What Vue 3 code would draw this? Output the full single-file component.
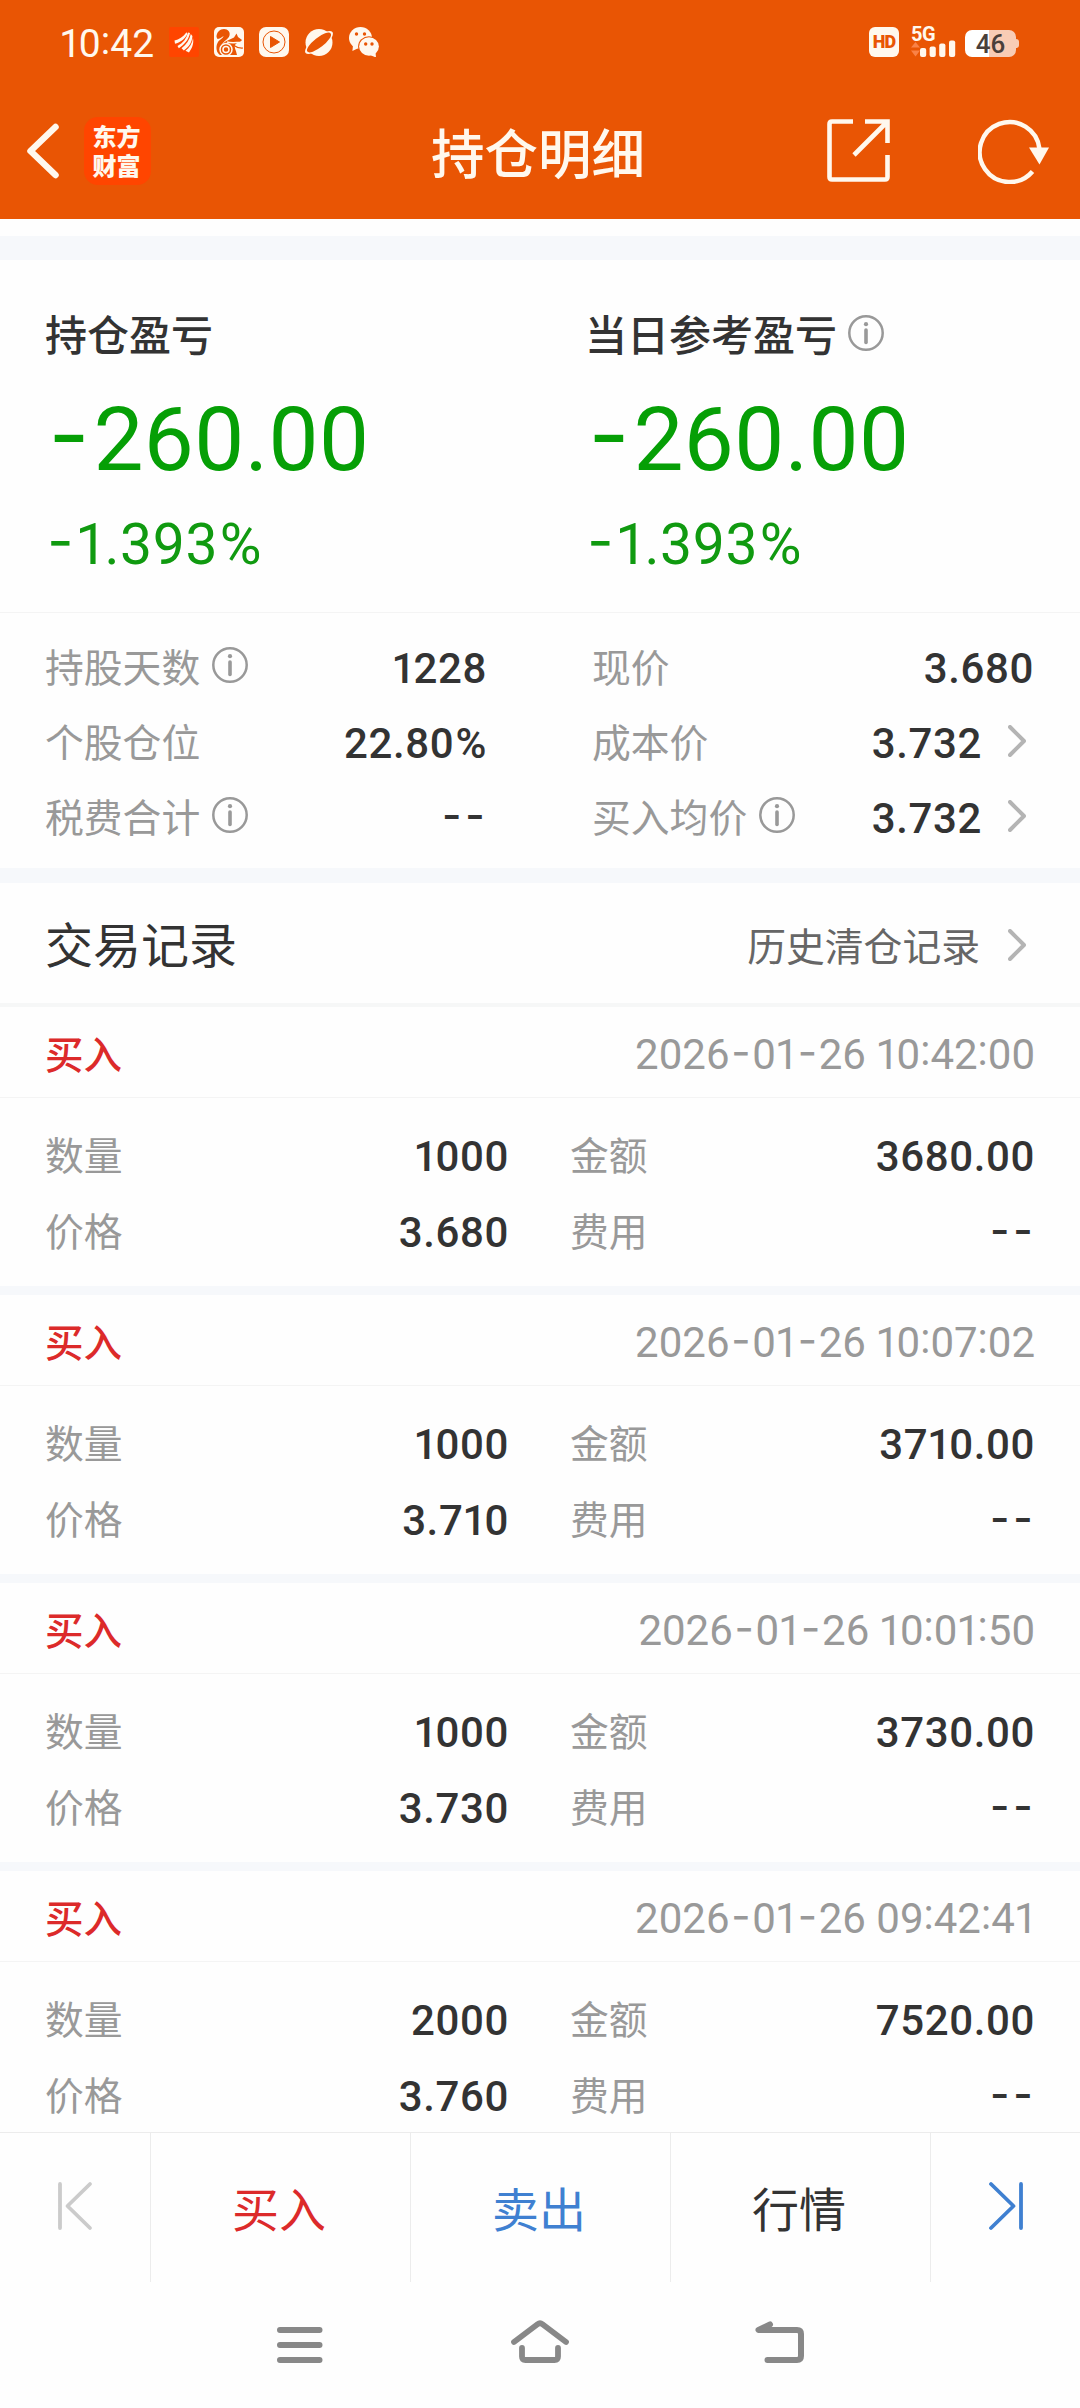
<script setup>
import { h } from 'vue'

const KIND = { '-': 'dash', ':': 'colon', '1': 'one', '.': 'dot', '%': 'pct' }

// Renders a figure character by character so punctuation can be tuned.
const Num = (props) =>
  h('span', { class: 'num' }, [...props.v].map((c) => (KIND[c] ? h('span', { class: KIND[c] }, c) : c)))
Num.props = ['v']

const Info = () =>
  h('svg', { class: 'info', viewBox: '0 0 36 36', width: 36, height: 36 }, [
    h('circle', { cx: 18, cy: 18, r: 16.7, fill: 'none', stroke: '#999', 'stroke-width': 2.5 }),
    h('circle', { cx: 18, cy: 9.2, r: 2.1, fill: '#999' }),
    h('path', { d: 'M18 15v12.5', stroke: '#999', 'stroke-width': 3.6, 'stroke-linecap': 'round' }),
  ])

const Arrow = () =>
  h('svg', { class: 'arrow', viewBox: '0 0 18 32', width: 18, height: 32 }, [
    h('path', {
      d: 'M2 2L16 16L2 30',
      fill: 'none',
      stroke: '#b4b4b4',
      'stroke-width': 4,
      'stroke-linecap': 'round',
      'stroke-linejoin': 'round',
    }),
  ])

const summary = [
  { label: '持仓盈亏', amount: '-260.00', rate: '-1.393%' },
  { label: '当日参考盈亏', info: true, amount: '-260.00', rate: '-1.393%' },
]

const details = [
  [
    { label: '持股天数', info: true, value: '1228' },
    { label: '个股仓位', value: '22.80%' },
    { label: '税费合计', info: true, value: '--' },
  ],
  [
    { label: '现价', value: '3.680' },
    { label: '成本价', value: '3.732', link: true },
    { label: '买入均价', info: true, value: '3.732', link: true },
  ],
]

const records = [
  { time: '2026-01-26 10:42:00', qty: '1000', amount: '3680.00', price: '3.680', fee: '--' },
  { time: '2026-01-26 10:07:02', qty: '1000', amount: '3710.00', price: '3.710', fee: '--' },
  { time: '2026-01-26 10:01:50', qty: '1000', amount: '3730.00', price: '3.730', fee: '--' },
  { time: '2026-01-26 09:42:41', qty: '2000', amount: '7520.00', price: '3.760', fee: '--' },
]
</script>

<template>
  <div class="page">
    <header class="top">
      <div class="status">
        <span class="clock"><Num v="10:42" /></span>
        <div class="apps">
          <svg viewBox="0 0 30 30" width="30" height="30">
            <rect width="30" height="30" rx="2" fill="#ff4500" />
            <path d="M5.5 13.5C10 12.5 14 10 17.5 5.2L18.4 7C15.500 12.500 11 15.500 6 16.800Z" fill="#fff8ee" />
            <path d="M19 5.500L21 6C19.500 13 15.500 17.500 9.800 21.200L8.500 19C14 16 17.500 11.500 19 5.500Z" fill="#fff8ee" />
            <path d="M21.800 7L23.400 9C23.200 15 20 20 14.800 23.500L12.500 21.300C17.500 17.500 20.500 13 21.800 7Z" fill="#fff8ee" />
            <path d="M24 11C25.200 17 22.500 22 20 25.500L16.500 23.800C20.500 20.500 23.300 16.500 24 11Z" fill="#fff8ee" />
          </svg>
          <svg viewBox="0 0 30 30" width="30" height="30">
            <rect width="30" height="30" rx="5" fill="#fff8ee" />
            <path
              d="M2.500 10C2.500 5 6 2 10 2C14 2 16.500 5 15.500 8.500C14.500 12.500 9 14 8 18C11 13.500 16 13 20 10.500L22.500 6.500L24 10L28 13C26.500 15.500 23 15 21 18C20 20 22 23 23 28H6C2.500 26 1.500 20 3.500 16C5 12.500 9 12 9.500 9C7 11 5 12 3.500 12Z"
              fill="#e95504"
            />
            <circle cx="12" cy="22.500" r="6" fill="#e95504" stroke="#fff8ee" stroke-width="1.500" />
            <circle cx="12" cy="22.500" r="3" fill="#e95504" stroke="#fff8ee" stroke-width="1.500" />
            <path d="M13 15C18 16.500 24 15 29 15.500" fill="none" stroke="#fff8ee" stroke-width="1.500" />
            <path d="M19 18Q24 21.500 29 21" fill="none" stroke="#e95504" stroke-width="1.200" />
          </svg>
          <svg viewBox="0 0 30 30" width="30" height="30">
            <rect width="30" height="30" rx="7" fill="#fff8ee" />
            <circle cx="15" cy="15" r="11" fill="none" stroke="#e95504" stroke-width="1" />
            <path d="M11.500 9.500V20.500L20.500 15Z" fill="#e95504" stroke="#e95504" stroke-linejoin="round" />
          </svg>
          <svg viewBox="0 0 30 30" width="30" height="30">
            <circle cx="15" cy="15.500" r="13.500" fill="#fff8ee" />
            <g transform="rotate(-38 15 15.500)">
              <ellipse cx="15" cy="15.500" rx="17" ry="6.200" fill="#fff8ee" />
              <ellipse cx="15" cy="15.500" rx="14.800" ry="4.900" fill="#e95504" />
            </g>
          </svg>
          <svg viewBox="0 0 30 30" width="30" height="30">
            <path d="M4 18.500L3.400 24L8.500 21.500Z" fill="#fff8ee" />
            <ellipse cx="11.500" cy="11" rx="11.500" ry="11" fill="#fff8ee" />
            <circle cx="7.500" cy="7" r="1.700" fill="#e95504" />
            <circle cx="15.500" cy="7" r="1.700" fill="#e95504" />
            <ellipse cx="20" cy="19.500" rx="10.900" ry="10.300" fill="#e95504" />
            <ellipse cx="20" cy="19.500" rx="9.900" ry="9.300" fill="#fff8ee" />
            <path d="M21 28L27 30.500L26.500 25Z" fill="#fff8ee" />
            <circle cx="16.700" cy="17" r="1.700" fill="#e95504" />
            <circle cx="23" cy="17" r="1.700" fill="#e95504" />
          </svg>
        </div>
        <div class="signals">
          <span class="hd">HD</span>
          <div class="net">
            <span class="fiveg">5G</span>
            <svg viewBox="0 0 45 17" width="45" height="17">
              <path d="M0 7.500L4.500 2L9 7.500ZM0 10.500H9L4.500 16.500Z" fill="#f98247" />
              <rect x="9" y="8" width="6.200" height="9" rx="2" fill="#fff8ee" />
              <rect x="18.600" y="6.500" width="6.200" height="10.500" rx="2" fill="#fff8ee" />
              <rect x="28.200" y="3.500" width="6.200" height="13.500" rx="2" fill="#fff8ee" />
              <rect x="38" y="0.500" width="6.200" height="16.500" rx="2" fill="#fff8ee" />
            </svg>
          </div>
          <div class="battery"><span class="cell">46</span><i class="nub"></i></div>
        </div>
      </div>
      <div class="bar">
        <svg class="back" viewBox="0 0 33 56" width="33" height="56">
          <path d="M29.500 4L4.500 28L29.500 52" fill="none" stroke="#fff8ee" stroke-width="6.500" stroke-linecap="round" stroke-linejoin="round" />
        </svg>
        <div class="logo"><span>东方</span><span>财富</span></div>
        <h1>持仓明细</h1>
        <svg class="share" viewBox="0 0 64 64" width="64" height="64">
          <path
            d="M26 2.500H5Q2.500 2.500 2.500 5V58Q2.500 60.500 5 60.500H58Q60.500 60.500 60.500 58V36M38 2.500H60.500V24M60.500 2.500L27 36"
            fill="none" stroke="#fff8ee" stroke-width="4.600"
          />
        </svg>
        <svg class="refresh" viewBox="0 0 72 66" width="72" height="66">
          <path d="M54.500 53.500A30 30 0 1 1 61.500 31" fill="none" stroke="#fff8ee" stroke-width="4.500" />
          <path d="M51 29.500H71L61.500 46.500Z" fill="#fff8ee" />
        </svg>
      </div>
    </header>

    <section class="summary">
      <div v-for="s in summary" :key="s.label" class="sum">
        <div class="sum-label">{{ s.label }}<Info v-if="s.info" /></div>
        <div class="sum-amount"><Num :v="s.amount" /></div>
        <div class="sum-rate"><Num :v="s.rate" /></div>
      </div>
    </section>

    <section class="details">
      <div v-for="(col, i) in details" :key="i" class="col">
        <div v-for="d in col" :key="d.label" class="row">
          <span class="label">{{ d.label }}</span>
          <Info v-if="d.info" />
          <span class="value"><Num :v="d.value" /></span>
          <Arrow v-if="d.link" />
        </div>
      </div>
    </section>

    <section class="heading">
      <h2>交易记录</h2>
      <span class="history">历史清仓记录</span>
      <Arrow />
    </section>

    <main class="records">
      <article v-for="r in records" :key="r.time" class="record">
        <div class="record-head">
          <span class="side">买入</span>
          <span class="time"><Num :v="r.time" /></span>
        </div>
        <div class="record-body">
          <div class="row">
            <span class="label">数量</span><span class="value"><Num :v="r.qty" /></span>
            <span class="label second">金额</span><span class="value"><Num :v="r.amount" /></span>
          </div>
          <div class="row">
            <span class="label">价格</span><span class="value"><Num :v="r.price" /></span>
            <span class="label second">费用</span><span class="value"><Num :v="r.fee" /></span>
          </div>
        </div>
      </article>
    </main>

    <footer class="actions">
      <div class="edge">
        <svg viewBox="0 0 36 50" width="36" height="50">
          <path d="M3 3V47M33 3L10.500 25L33 47" fill="none" stroke="#cbcbcb" stroke-width="3.800" stroke-linecap="round" stroke-linejoin="round" />
        </svg>
      </div>
      <div class="action buy">买入</div>
      <div class="action sell">卖出</div>
      <div class="action">行情</div>
      <div class="edge">
        <svg viewBox="0 0 36 50" width="36" height="50">
          <path d="M33 3V47M3 3L25.500 25L3 47" fill="none" stroke="#3f80d1" stroke-width="3.800" stroke-linecap="round" stroke-linejoin="round" />
        </svg>
      </div>
    </footer>

    <nav class="system">
      <svg viewBox="0 0 60 50" width="60" height="50">
        <path d="M10 10H49.500M10 25H49.500M10 40H49.500" fill="none" stroke="#888" stroke-width="6" stroke-linecap="round" />
      </svg>
      <svg viewBox="0 0 60 50" width="60" height="50">
        <path d="M4 22L27.500 4.200Q30 2.300 32.500 4.200L56 22M12 28V36.500Q12 40 15.500 40H44.500Q48 40 48 36.500V28" fill="none" stroke="#888" stroke-width="5.800" stroke-linecap="round" />
      </svg>
      <svg viewBox="0 0 60 50" width="60" height="50">
        <path d="M20 4.500L8.500 10H47Q51 10 51 14V36Q51 40 47 40H17.500" fill="none" stroke="#888" stroke-width="6" stroke-linecap="round" stroke-linejoin="round" />
      </svg>
    </nav>
  </div>
</template>

<style>
body {
  margin: 0;
  background: #fefefe;
}
</style>

<style scoped>
.page {
  width: 1080px;
  height: 2408px;
  overflow: hidden;
  display: flex;
  flex-direction: column;
  background: #fefefe;
  color: #333;
  font-family: 'Noto Sans CJK SC', sans-serif;
}
.page > * {
  flex: none;
  box-sizing: border-box;
}
h1,
h2 {
  margin: 0;
  font-weight: 400;
}
svg {
  display: block;
  flex: none;
}

/* figures */
.num {
  font-family: Roboto, 'Liberation Sans', sans-serif;
  white-space: pre;
}
.num :deep(.dash) {
  font-family: Inter, sans-serif;
  line-height: 1;
  margin: 0 0.04em;
  vertical-align: 0.05em;
}
.num :deep(.colon) {
  vertical-align: 0.09em;
  line-height: 1;
}
.num :deep(.one) {
  margin: 0 -0.06em 0 -0.02em;
}
.num :deep(.pct) {
  margin-left: 0.03em;
}

/* header */
.top {
  height: 219px;
  background: #e95504;
  color: #fff8ee;
}
.status {
  height: 84px;
  padding: 0 61px 0 60px;
  display: flex;
  align-items: center;
}
.clock {
  width: 109px;
  font-size: 39px;
  line-height: 40px;
}
.apps {
  display: flex;
  gap: 15px;
}
.signals {
  margin-left: auto;
  display: flex;
  align-items: center;
}
.hd {
  width: 30px;
  height: 30px;
  border-radius: 6px;
  background: #fff8ee;
  color: #e95504;
  font: 900 18px/30px Roboto, sans-serif;
  letter-spacing: -0.8px;
  text-align: center;
}
.net {
  height: 30px;
  margin-left: 12px;
}
.fiveg {
  display: block;
  height: 13px;
  font: 700 20px/15px Roboto, sans-serif;
  letter-spacing: -0.5px;
}
.battery {
  display: flex;
  align-items: center;
  margin: 3px 0 0 9px;
}
.cell {
  width: 51px;
  height: 27px;
  border-radius: 7px;
  background: linear-gradient(90deg, #fff 24px, #f8ccb5 24px);
  color: #4a3f3a;
  font: 500 26px/28px Roboto, sans-serif;
  text-align: center;
}
.nub {
  width: 3px;
  height: 9px;
  border-radius: 0 3px 3px 0;
  background: #f8ccb5;
}
.bar {
  height: 134px;
  padding-left: 26px;
  display: flex;
  align-items: center;
}
.logo {
  width: 67px;
  height: 68px;
  margin-left: 25px;
  border-radius: 14px;
  background: #ff4500;
  display: flex;
  flex-direction: column;
  align-items: center;
  justify-content: center;
  font-size: 24px;
  font-weight: 900;
  line-height: 29px;
  padding: 0 2px 3px 0;
  box-sizing: border-box;
}
h1 {
  margin: 0 0 0 280px;
  width: 216px;
  font-size: 53.500px;
  font-weight: 500;
  line-height: 60px;
}
.share {
  margin-left: 180px;
}
.refresh {
  margin-left: 87px;
}

/* profit summary */
.summary {
  height: 377px;
  margin-top: 17px;
  border-top: 24px solid #f6f8fb;
  border-bottom: 1px solid #f4f4f4;
  padding: 48px 0 0 45px;
  display: flex;
}
.sum {
  flex: none;
  width: 540px;
}
.sum-label {
  height: 50px;
  display: flex;
  align-items: center;
  font-size: 42px;
  font-weight: 500;
  line-height: 50px;
}
.sum-label .info {
  margin-left: 11px;
}
.sum-amount {
  margin-top: 24px;
  font-size: 89px;
  line-height: 100px;
  height: 100px;
  letter-spacing: 0.400px;
  color: #069f06;
}
.sum-rate {
  margin-top: 27px;
  font-size: 57px;
  line-height: 60px;
  height: 60px;
  letter-spacing: 0.600px;
  color: #109a10;
}

/* position details */
.details {
  height: 270px;
  padding: 14px 46px 0 45px;
  border-bottom: 15px solid #f6f8fb;
  display: flex;
  justify-content: space-between;
}
.col {
  width: 442px;
}
.row {
  display: flex;
  align-items: center;
  height: 75px;
}
.label {
  font-size: 38.800px;
  line-height: 50px;
  color: #999;
}
.row .info {
  margin-left: 12px;
  margin-top: 1px;
}
.value {
  margin-left: auto;
  margin-top: 4px;
  font-size: 42px;
  font-weight: 500;
  line-height: 50px;
  letter-spacing: 0.600px;
}
.arrow {
  margin: 3px 8px 0 26px;
}

/* trade records */
.heading {
  height: 124px;
  border-bottom: 4px solid #f6f7f7;
  padding: 0 46px 0 45px;
  display: flex;
  align-items: center;
}
h2 {
  font-size: 48px;
  line-height: 60px;
  margin-top: -3px;
}
.history {
  margin-left: auto;
  margin-top: 2px;
  font-size: 38.800px;
  line-height: 50px;
  color: #666;
}
.heading .arrow {
  margin: 4px 8px 0 28px;
}
.records {
  height: 1125px;
  overflow: hidden;
}
.record {
  height: 288px;
  box-sizing: border-box;
  border-bottom: 9px solid #f6f8fb;
}
.record-head {
  height: 91px;
  box-sizing: border-box;
  border-bottom: 1px solid #f4f4f4;
  padding: 0 45px;
  display: flex;
  align-items: center;
  justify-content: space-between;
}
.side {
  margin-top: -1px;
  font-size: 38.500px;
  font-weight: 500;
  line-height: 50px;
  color: #dc2a2a;
}
.time {
  margin-top: 2px;
  font-size: 42px;
  line-height: 50px;
  color: #999;
}
.record-body {
  padding: 17px 45px 0;
}
.record-body .row {
  height: 76px;
  display: grid;
  grid-template-columns: 120px 344px 182px 344px;
}
.record-body .value {
  margin-left: 0;
  text-align: right;
}
.second {
  padding-left: 61px;
}

/* bottom bars */
.actions {
  height: 150px;
  border-top: 1px solid #ececec;
  display: flex;
}
.actions > * {
  display: flex;
  align-items: center;
  justify-content: center;
}
.actions > * + * {
  border-left: 1px solid #ececec;
}
.edge {
  width: 150px;
  padding-bottom: 3px;
  box-sizing: border-box;
}
.action {
  flex: 1;
  padding: 0 3px 2px 0;
  font-size: 47px;
  line-height: 60px;
}
.buy {
  color: #dc2a2a;
}
.sell {
  color: #3f80d1;
}
.system {
  height: 126px;
  padding: 38px 270px 0;
  display: flex;
  justify-content: space-between;
}
</style>
